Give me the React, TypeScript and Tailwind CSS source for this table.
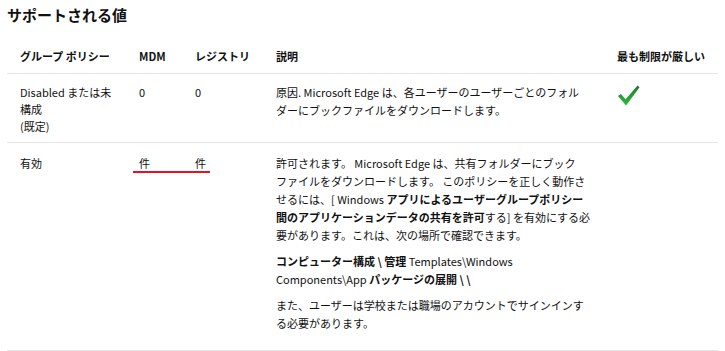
import React from "react";

const font = { fontFamily: '"Noto Sans CJK JP", "Noto Sans", sans-serif' };

function Check() {
  return (
    <svg width="23" height="23" viewBox="0 0 24 24" className="block">
      <defs>
        <linearGradient id="cg" x1="0" y1="0" x2="0" y2="1">
          <stop offset="0" stopColor="#187a26" />
          <stop offset="1" stopColor="#2cbd3f" />
        </linearGradient>
      </defs>
      <path d="M1 12.5 L4 10.5 L9 16 L21.5 1.5 L23.5 3.5 L9.5 22.5 Z" fill="url(#cg)" />
    </svg>
  );
}

const row = "grid grid-cols-[119px_56px_81px_341px_1fr] border-b border-[#e6e6e6]";
const cell = "pl-[13px] whitespace-nowrap";

export default function App() {
  return (
    <div className="bg-white w-[725px] h-[351px] overflow-hidden text-[#111] text-[11px] leading-[18px]" style={font}>
      <div className="pl-[7px] pt-[5px] text-[15px] leading-[20px] font-bold">サポートされる値</div>
      <div className="ml-[7px] w-[711px] mt-[22px]">
        <div className={row + " pb-[8px] font-bold"}>
          <div className={cell}>グループ ポリシー</div>
          <div className={cell}>MDM</div>
          <div className={cell}>レジストリ</div>
          <div className={cell}>説明</div>
          <div className={cell}>最も制限が厳しい</div>
        </div>
        <div className={row + " pt-[9px] pb-[7px]"}>
          <div className={cell}>
            <div>Disabled または未</div>
            <div className="leading-[17px]">構成</div>
            <div className="leading-[17px]">(既定)</div>
          </div>
          <div className={cell}>0</div>
          <div className={cell}>0</div>
          <div className={cell}>
            <div>原因. Microsoft Edge は、各ユーザーのユーザーごとのフォル</div>
            <div>ダーにブックファイルをダウンロードします。</div>
          </div>
          <div className={cell + " pt-[1px]"}>
            <Check />
          </div>
        </div>
        <div className={row + " pt-[11px] pb-[18px] relative"}>
          <div className={cell}>有効</div>
          <div className={cell}>件</div>
          <div className={cell}>件</div>
          <div className={cell}>
            <div>許可されます。 Microsoft Edge は、共有フォルダーにブック</div>
            <div>ファイルをダウンロードします。 このポリシーを正しく動作さ</div>
            <div>
              せるには、[ Windows <b>アプリによるユーザーグループポリシー</b>
            </div>
            <div>
              <b>間のアプリケーションデータの共有を許可</b>する] を有効にする必
            </div>
            <div>要があります。これは、次の場所で確認できます。</div>
            <div className="mt-[8px]">
              <b>コンピューター構成 \ 管理</b> Templates\Windows
            </div>
            <div>
              Components\App <b>パッケージの展開 \ \</b>
            </div>
            <div className="mt-[8px]">また、ユーザーは学校または職場のアカウントでサインインす</div>
            <div>る必要があります。</div>
          </div>
          <div className={cell}></div>
          <div className="absolute left-[126px] top-[28px] w-[77px] h-[2px] bg-[#e81123]"></div>
        </div>
      </div>
    </div>
  );
}
